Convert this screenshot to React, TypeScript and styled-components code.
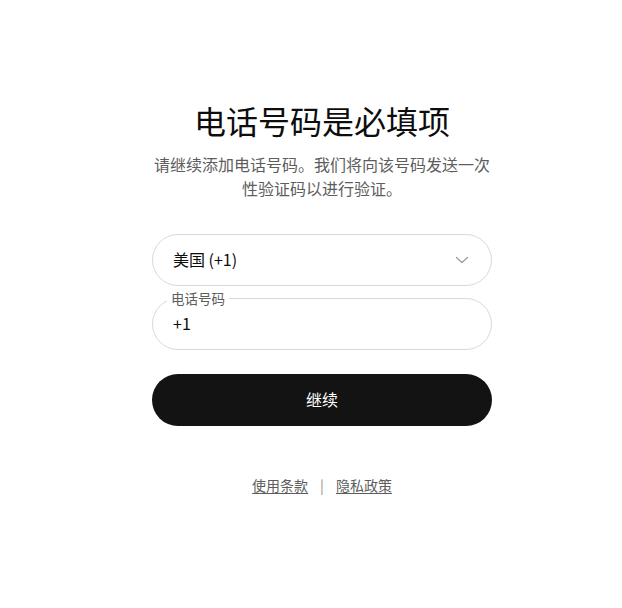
import React, { FC } from "react";
import styled, { createGlobalStyle } from "styled-components";

const GlobalStyle = createGlobalStyle`
  * { box-sizing: border-box; }
  body {
    margin: 0;
    background: #fff;
    font-family: Inter, "Noto Sans CJK SC", sans-serif;
    color: #0d0d0d;
  }
`

const Page = styled.main`
  display: flex;
  justify-content: center;
  padding: 100px 0 0 22px;
`

const Card = styled.section`
  width: 340px;
  display: flex;
  flex-direction: column;
  align-items: center;
`

const Title = styled.h1`
  margin: 0;
  font-size: 32px;
  line-height: 40px;
  font-weight: 400;
  font-family: "Noto Sans CJK SC", sans-serif;
  color: #0d0d0d;
`

const Subtitle = styled.p`
  margin: 12px 0 0;
  font-size: 16px;
  line-height: 24px;
  text-align: center;
  color: #5d5d5d;
  font-family: "Noto Sans CJK SC", sans-serif;
`

const Form = styled.form`
  width: 100%;
  margin-top: 34px;
  display: flex;
  flex-direction: column;
  gap: 12px;
`

const Field = styled.div`
  position: relative;
  height: 52px;
  border: 1px solid #d9d9d9;
  border-radius: 26px;
  display: flex;
  align-items: center;
  justify-content: space-between;
  padding: 0 22px 3px 20px;
  font-size: 16px;
`

const FieldValue = styled.span`
  color: #0d0d0d;
  font-family: "Noto Sans CJK SC", sans-serif;
`

const FloatLabel = styled.span`
  position: absolute;
  top: -9px;
  left: 14px;
  padding: 0 4px;
  background: #fff;
  font-size: 13.5px;
  line-height: 16px;
  color: #5d5d5d;
  font-family: "Noto Sans CJK SC", sans-serif;
`

const Chevron = styled.svg`
  width: 14px;
  height: 14px;
  margin-top: 3px;
`

const Button = styled.button`
  margin-top: 12px;
  height: 52px;
  padding: 0 0 3px;
  border: none;
  border-radius: 26px;
  background: #131313;
  color: #fff;
  font-size: 16px;
  font-family: "Noto Sans CJK SC", sans-serif;
  cursor: pointer;
`

const Footer = styled.nav`
  margin-top: 49px;
  display: flex;
  align-items: center;
  gap: 12px;
  font-size: 14px;
  line-height: 20px;
  color: #5d5d5d;
  font-family: "Noto Sans CJK SC", sans-serif;
`

const FooterLink = styled.a`
  color: #5d5d5d;
  text-decoration: underline;
  text-underline-offset: 2px;
`

const Divider = styled.span`
  color: #8e8e8e;
`

const App: FC = () => {
  return (
    <>
      <GlobalStyle />
      <Page>
        <Card>
          <Title>电话号码是必填项</Title>
          <Subtitle>请继续添加电话号码。我们将向该号码发送一次性验证码以进行验证。</Subtitle>
          <Form onSubmit={e => e.preventDefault()}>
            <Field>
              <FieldValue>美国 (+1)</FieldValue>
              <Chevron viewBox="0 0 14 14" fill="none" stroke="#9b9b9b" strokeWidth="1.2" strokeLinecap="round" strokeLinejoin="round">
                <path d="M1.5 4.5l5.5 5 5.5-5" />
              </Chevron>
            </Field>
            <Field>
              <FloatLabel>电话号码</FloatLabel>
              <FieldValue>+1</FieldValue>
            </Field>
            <Button type="submit">继续</Button>
          </Form>
          <Footer>
            <FooterLink href="#">使用条款</FooterLink>
            <Divider>|</Divider>
            <FooterLink href="#">隐私政策</FooterLink>
          </Footer>
        </Card>
      </Page>
    </>
  )
}

export default App
